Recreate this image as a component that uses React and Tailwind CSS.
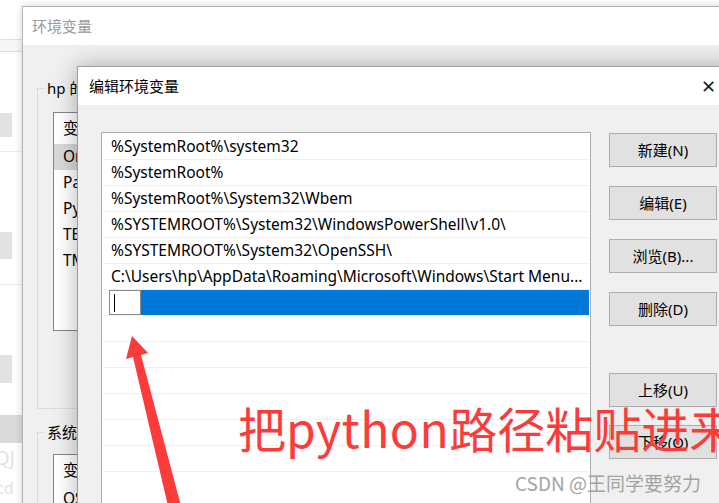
import React from "react";

const paths = [
  "%SystemRoot%\\system32",
  "%SystemRoot%",
  "%SystemRoot%\\System32\\Wbem",
  "%SYSTEMROOT%\\System32\\WindowsPowerShell\\v1.0\\",
  "%SYSTEMROOT%\\System32\\OpenSSH\\",
  "C:\\Users\\hp\\AppData\\Roaming\\Microsoft\\Windows\\Start Menu...",
];

const WinButton = ({ children }) => (
  <button className="w-[108px] h-[34px] shrink-0 bg-[#e1e1e1] border border-[#adadad] text-[15px] text-black flex items-center justify-center">
    {children}
  </button>
);

const BackWindow = () => (
  <div className="w-[22px] h-[503px] bg-white flex flex-col">
    <div className="h-[39px] shrink-0" />
    <div className="h-[13px] shrink-0 bg-[#f7f7f7] border-t border-b border-[#dedede]" />
    <div className="h-[61px] shrink-0" />
    <div className="h-[24px] w-[12px] shrink-0 bg-[#e1e1e1]" />
    <div className="h-[14px] shrink-0" />
    <div className="h-[1px] shrink-0 bg-[#ececec]" />
    <div className="h-[80px] shrink-0" />
    <div className="h-[27px] w-[12px] shrink-0 bg-[#e1e1e1]" />
    <div className="h-[25px] shrink-0" />
    <div className="h-[1px] shrink-0 bg-[#ececec]" />
    <div className="h-[70px] shrink-0" />
    <div className="h-[28px] w-[12px] shrink-0 bg-[#e1e1e1]" />
    <div className="h-[32px] shrink-0" />
    <div className="h-[28px] shrink-0 bg-[#dadada]" />
    <div className="h-[30px] shrink-0 text-[20px] leading-[30px] text-[#e2e2e2] -ml-[6px]">QJ</div>
    <div className="h-[20px] shrink-0 text-[16px] leading-[30px] text-[#e2e2e2] -ml-[4px]">cd</div>
  </div>
);

const EnvWindow = () => (
  <div className="absolute left-[22px] top-[6px] w-[720px] h-[600px] border-t border-l border-[#b5b5b5] shadow-[0_0_8px_rgba(0,0,0,0.18)] flex flex-col">
    <div className="h-[38px] shrink-0 bg-white flex items-center pl-[9px] text-[15px] text-[#9a9a9a]">
      环境变量
    </div>
    <div className="flex-1 bg-[#f0f0f0] pl-[14px] pt-[33px]">
      <fieldset className="w-[600px] h-[331px] border border-[#dcdcdc] pl-[15px]">
        <legend className="-ml-[8px] px-[2px] text-[15px] leading-[20px] text-black">
          hp 的用户变量(U)
        </legend>
        <div className="mt-[14px] h-[219px] bg-white border border-[#828790] text-[15.5px] text-black">
          <div className="h-[31px] flex items-center pl-[9px]">变量</div>
          <div className="h-[26px] flex items-center pl-[9px] bg-[#d9d9d9]">OneDrive</div>
          <div className="h-[26px] flex items-center pl-[9px]">Path</div>
          <div className="h-[26px] flex items-center pl-[9px]">PyCharm</div>
          <div className="h-[26px] flex items-center pl-[9px]">TEMP</div>
          <div className="h-[26px] flex items-center pl-[9px]">TMP</div>
        </div>
      </fieldset>
      <fieldset className="mt-[13px] w-[600px] h-[120px] border border-[#dcdcdc] pl-[15px]">
        <legend className="-ml-[8px] px-[2px] text-[15px] leading-[20px] text-black">
          系统变量(S)
        </legend>
        <div className="mt-[12px] h-[100px] bg-white border border-[#828790] text-[15.5px] text-black">
          <div className="h-[31px] flex items-center pl-[9px]">变量</div>
          <div className="h-[26px] flex items-center pl-[9px]">OS</div>
        </div>
      </fieldset>
    </div>
  </div>
);

const EditDialog = () => (
  <div className="absolute left-[77px] top-[66px] w-[700px] h-[520px] border-t border-l border-[#9d9d9d] shadow-[0_0_22px_rgba(0,0,0,0.3)] flex flex-col">
    <div className="h-[38px] shrink-0 bg-white flex items-center justify-between pl-[11px] pr-[7px] text-[15px] text-black">
      <span>编辑环境变量</span>
      <span className="text-[18px] text-[#222] leading-none mr-[54px]">✕</span>
    </div>
    <div className="flex-1 bg-[#f0f0f0] pl-[23px] pt-[27px] flex gap-[18px]">
      <div className="w-[490px] h-[420px] shrink-0 bg-white border border-[#adadad] p-[1px] text-[15.5px] text-black">
        {paths.map((p) => (
          <div
            key={p}
            className="h-[26px] border-b border-[#f0f0f0] flex items-center pl-[8px] whitespace-nowrap"
          >
            {p}
          </div>
        ))}
        <div className="h-[26px] flex pl-[6px] border-b border-[#f0f0f0]">
          <div className="w-[32px] h-full bg-white border border-[#8a8a8a] flex items-center pl-[4px]">
            <div className="w-[1px] h-[18px] bg-black" />
          </div>
          <div className="flex-1 bg-[#0078d7]" />
        </div>
        {Array.from({ length: 6 }).map((_, i) => (
          <div key={i} className="h-[26px] border-b border-[#f0f0f0]" />
        ))}
      </div>
      <div className="flex flex-col pt-[1px]">
        <div className="flex flex-col gap-[19px]">
          <WinButton>新建(N)</WinButton>
          <WinButton>编辑(E)</WinButton>
          <WinButton>浏览(B)...</WinButton>
          <WinButton>删除(D)</WinButton>
        </div>
        <div className="flex flex-col gap-[18px] mt-[47px]">
          <WinButton>上移(U)</WinButton>
          <WinButton>下移(O)</WinButton>
        </div>
      </div>
    </div>
  </div>
);

export default function App() {
  return (
    <div
      className="relative w-[719px] h-[503px] overflow-hidden bg-white"
      style={{ fontFamily: '"Noto Sans", "Noto Sans CJK SC", sans-serif' }}
    >
      <BackWindow />
      <EnvWindow />
      <EditDialog />

      {/* annotation */}
      <svg className="absolute left-0 top-0" width="719" height="503">
        <polygon
          points="132,336 148,353 141,355 181,506 168,506 133,357 126,359"
          fill="#fc3b3b"
        />
      </svg>
      <div
        className="absolute left-[238px] top-[403px] text-[48px] leading-none text-[#fc3b3b] whitespace-nowrap"
        style={{ fontFamily: '"Noto Sans CJK SC", sans-serif' }}
      >
        把<span className="tracking-[0.5px]">python</span>路径粘贴进来
      </div>
      <div
        className="absolute left-[515px] top-[472px] text-[19px] leading-[22px] text-[#a3a3a3] whitespace-nowrap"
        style={{ fontFamily: '"Noto Sans CJK SC", sans-serif' }}
      >
        CSDN @王同学要努力
      </div>
    </div>
  );
}
